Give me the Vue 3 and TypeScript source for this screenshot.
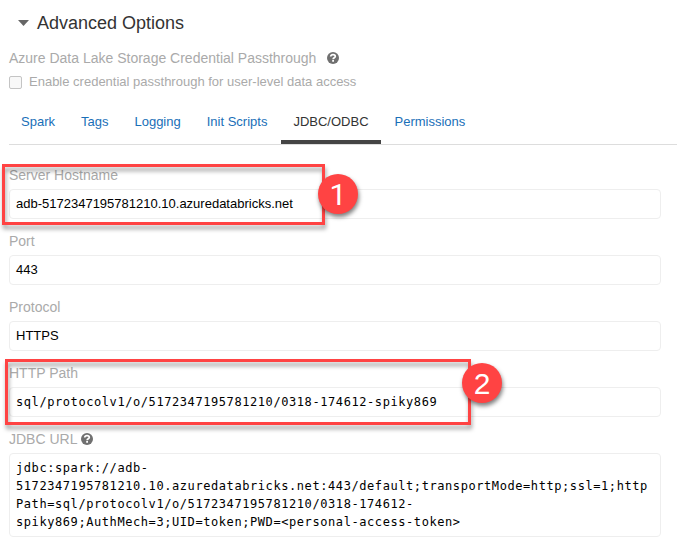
<script setup lang="ts">
import { ref } from 'vue'

interface Field {
  label: string
  value: string
  mono?: boolean
  multiline?: boolean
  help?: boolean
  mark?: number
}

const tabs: string[] = ['Spark', 'Tags', 'Logging', 'Init Scripts', 'JDBC/ODBC', 'Permissions']
const active = ref('JDBC/ODBC')

const fields: Field[] = [
  { label: 'Server Hostname', value: 'adb-5172347195781210.10.azuredatabricks.net', mark: 1 },
  { label: 'Port', value: '443' },
  { label: 'Protocol', value: 'HTTPS' },
  { label: 'HTTP Path', value: 'sql/protocolv1/o/5172347195781210/0318-174612-spiky869', mono: true, mark: 2 },
  {
    label: 'JDBC URL',
    value:
      'jdbc:spark://adb-\n5172347195781210.10.azuredatabricks.net:443/default;transportMode=http;ssl=1;http\nPath=sql/protocolv1/o/5172347195781210/0318-174612-\nspiky869;AuthMech=3;UID=token;PWD=<personal-access-token>',
    mono: true,
    multiline: true,
    help: true,
  },
]
</script>

<template>
  <main class="panel">
    <header class="heading">
      <svg class="caret" width="11" height="6" viewBox="0 0 11 6"><path d="M0 0h11L5.500 6z" fill="#666" /></svg>
      <h1>Advanced Options</h1>
    </header>

    <div class="label pass">
      <span>Azure Data Lake Storage Credential Passthrough</span>
      <svg class="help" width="12" height="12" viewBox="0 0 12 12">
        <circle cx="6" cy="6" r="6" fill="#707070" />
        <path d="M3.700 4.500C3.900 3 4.900 2.600 6 2.600c1.300 0 2.300.7 2.300 1.800C8.300 5.800 6.100 5.700 6.100 7.300" fill="none" stroke="#fff" stroke-width="1.700" />
        <path d="M5.200 8h1.800v1.700H5.200z" fill="#fff" />
      </svg>
    </div>
    <div class="check">
      <span class="box"></span>
      <span class="check-text">Enable credential passthrough for user-level data access</span>
    </div>

    <nav class="tabs">
      <a v-for="t in tabs" :key="t" class="tab" :class="{ active: t === active }" @click="active = t">{{ t }}</a>
    </nav>

    <section class="fields">
      <div v-for="f in fields" :key="f.label" class="field">
        <div class="label">
          <span>{{ f.label }}</span>
          <svg v-if="f.help" class="help" width="12" height="12" viewBox="0 0 12 12">
            <circle cx="6" cy="6" r="6" fill="#707070" />
            <path d="M3.700 4.500C3.900 3 4.900 2.600 6 2.600c1.300 0 2.300.7 2.300 1.800C8.300 5.800 6.100 5.700 6.100 7.300" fill="none" stroke="#fff" stroke-width="1.700" />
            <path d="M5.200 8h1.800v1.700H5.200z" fill="#fff" />
          </svg>
        </div>
        <div class="input" :class="{ mono: f.mono, multiline: f.multiline }">{{ f.value }}</div>
        <template v-if="f.mark">
          <div class="outline" :class="'outline-' + f.mark"></div>
          <div class="badge" :class="'badge-' + f.mark">{{ f.mark }}</div>
        </template>
      </div>
    </section>
  </main>
</template>

<style>
body {
  background: #fff;
}
</style>

<style scoped>
.panel {
  box-sizing: border-box;
  height: 547px;
  padding-left: 9px;
  overflow: hidden;
  font-family: 'Liberation Sans', Arial, sans-serif;
  font-size: 13px;
  color: #000;
}
.heading {
  display: flex;
  align-items: center;
  height: 46px;
  padding-left: 9px;
}
.caret {
  margin-right: 8px;
}
h1 {
  margin: 0;
  font-size: 18px;
  font-weight: 400;
  line-height: 24px;
  color: #333;
}
.label {
  display: flex;
  align-items: center;
  height: 24px;
  font-size: 14px;
  white-space: nowrap;
  color: #aaa;
}
.pass .help {
  margin-left: 10.500px;
}
.field .help {
  margin-left: 4px;
}
.check {
  display: flex;
  align-items: center;
  height: 24px;
  color: #aaa;
}
.check-text {
  padding-bottom: 2px;
}
.box {
  box-sizing: border-box;
  width: 13px;
  height: 13px;
  margin: 1px 7px 0 0;
  border: 1px solid #c4c4c4;
  border-radius: 2px;
  background: #f8f8f8;
}
.tabs {
  display: flex;
  gap: 1px;
  box-sizing: border-box;
  height: 46px;
  margin-top: 5px;
  border-bottom: 1px solid #ddd;
}
.tab {
  box-sizing: border-box;
  height: 45px;
  padding: 0 12.500px;
  border-bottom: 4px solid transparent;
  line-height: 46px;
  color: #1a6fb8;
  cursor: pointer;
}
.tab:first-child {
  padding-left: 12px;
}
.tab.active {
  border-color: #444;
  color: #333;
}
.fields {
  display: flex;
  flex-direction: column;
  gap: 12px;
  width: 652px;
  padding-top: 20px;
}
.field {
  position: relative;
}
.fields .label {
  box-sizing: border-box;
  padding-bottom: 4px;
}
.input {
  box-sizing: border-box;
  height: 30px;
  padding: 5px 6px;
  border: 1px solid #eee;
  border-radius: 4px;
  line-height: 18px;
  white-space: pre;
}
.mono {
  font-family: 'DejaVu Sans Mono', monospace;
  font-size: 12px;
  letter-spacing: 0.576px;
}
.multiline {
  height: 84px;
}
.outline {
  position: absolute;
  box-sizing: border-box;
  border: 3px solid #ff4343;
  filter: drop-shadow(1px 4px 2px rgba(0, 0, 0, 0.38));
}
.outline-1 {
  left: -7px;
  top: -1px;
  width: 323px;
  height: 61px;
}
.outline-2 {
  left: -4px;
  top: -4px;
  width: 466px;
  height: 66px;
}
.badge {
  position: absolute;
  width: 40px;
  height: 40px;
  border-radius: 50%;
  background: #ff4343;
  box-shadow: 1px 3px 4px rgba(0, 0, 0, 0.5);
  color: #fff;
  font-size: 30px;
  line-height: 42px;
  text-align: center;
}
.badge-1 {
  left: 309px;
  top: 9px;
  font-family: Roboto, sans-serif;
}
.badge-2 {
  left: 453px;
  top: 0;
}
</style>
